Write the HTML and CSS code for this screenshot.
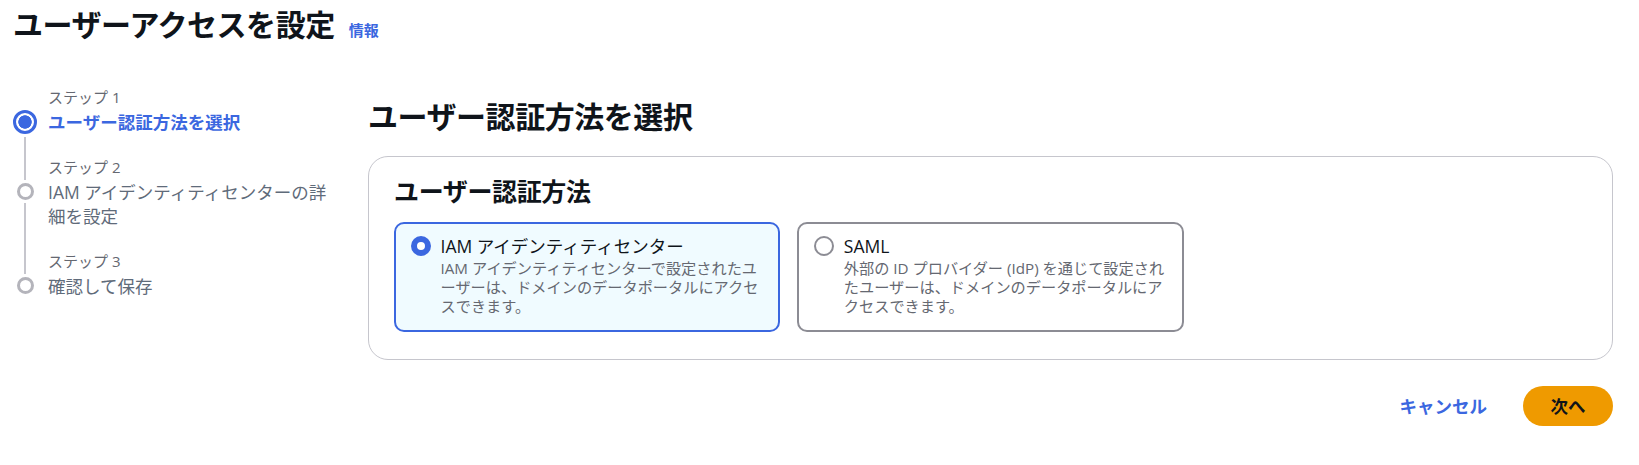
FILE: index.html
```html
<!DOCTYPE html>
<html lang="ja">
<head>
<meta charset="utf-8">
<title>ユーザーアクセスを設定</title>
<link rel="stylesheet" href="styles.css">
</head>
<body>
<div class="page">
  <header class="page-header">
    <h1 class="page-title">ユーザーアクセスを設定</h1>
    <a class="info-link" href="#">情報</a>
  </header>
  <div class="wizard">
    <nav class="steps">
      <ol class="step-list">
        <li class="step step-active">
          <div class="step-ind">
            <span class="seg seg-top seg-hidden"></span>
            <span class="dot dot-active"></span>
            <span class="seg seg-bottom"></span>
          </div>
          <div class="step-text">
            <div class="step-label">ステップ 1</div>
            <div class="step-title">ユーザー認証方法を選択</div>
          </div>
        </li>
        <li class="step">
          <div class="step-ind">
            <span class="seg seg-top seg-top-small"></span>
            <span class="dot"></span>
            <span class="seg seg-bottom"></span>
          </div>
          <div class="step-text">
            <div class="step-label">ステップ 2</div>
            <div class="step-title">IAM アイデンティティセンターの詳<br>細を設定</div>
          </div>
        </li>
        <li class="step">
          <div class="step-ind">
            <span class="seg seg-top seg-top-small"></span>
            <span class="dot"></span>
            <span class="seg seg-bottom seg-hidden"></span>
          </div>
          <div class="step-text">
            <div class="step-label">ステップ 3</div>
            <div class="step-title">確認して保存</div>
          </div>
        </li>
      </ol>
    </nav>
    <main class="form">
      <h1 class="form-title">ユーザー認証方法を選択</h1>
      <section class="container">
        <h2 class="container-title">ユーザー認証方法</h2>
        <div class="tiles">
          <label class="tile tile-selected">
            <span class="radio radio-checked"></span>
            <span class="tile-body">
              <span class="tile-title">IAM アイデンティティセンター</span>
              <span class="tile-desc">IAM アイデンティティセンターで設定されたユ<br>ーザーは、ドメインのデータポータルにアクセ<br>スできます。</span>
            </span>
          </label>
          <label class="tile">
            <span class="radio"></span>
            <span class="tile-body">
              <span class="tile-title">SAML</span>
              <span class="tile-desc">外部の ID プロバイダー (IdP) を通じて設定され<br>たユーザーは、ドメインのデータポータルにア<br>クセスできます。</span>
            </span>
          </label>
        </div>
      </section>
      <div class="actions">
        <button class="btn btn-link" type="button">キャンセル</button>
        <button class="btn btn-primary" type="button">次へ</button>
      </div>
    </main>
  </div>
</div>
</body>
</html>
```
FILE: styles.css
```css
* { box-sizing: border-box; }
html, body { margin: 0; padding: 0; background: #ffffff; }
body {
  font-family: "Open Sans", "Noto Sans CJK JP", sans-serif;
  color: #0f141a;
}
.page { padding: 6px 26px 0 13px; }

.page-header {
  display: flex;
  align-items: baseline;
  gap: 14px;
  height: 37.5px;
}
.page-title {
  margin: 0;
  font-size: 30px;
  line-height: 37.5px;
  letter-spacing: -0.015em;
  font-weight: 700;
}
.info-link {
  font-size: 15px;
  font-weight: 700;
  color: #3b67e0;
  text-decoration: none;
}

.wizard {
  display: grid;
  grid-template-columns: 355px 1fr;
  margin-top: 43.5px;
}

/* steps navigation */
.step-list { list-style: none; margin: 0; padding: 0; }
.step { display: flex; gap: 11px; }
.step-ind {
  flex: none;
  width: 24px;
  display: flex;
  flex-direction: column;
  align-items: center;
}
.seg { width: 2px; background: #c6c6cd; flex: none; }
.seg-top { height: 19.5px; margin-bottom: 3px; }
.seg-top-small { height: 23px; }
.seg-bottom { flex: 1; margin-top: 3px; }
.seg-hidden { background: transparent; }
.dot {
  flex: none;
  width: 17px;
  height: 17px;
  border-radius: 50%;
  border: 3px solid #b4b4bb;
  background: #ffffff;
}
.dot-active {
  width: 24px;
  height: 24px;
  border: 3px solid #3b67e0;
  background: radial-gradient(circle, #3b67e0 0 6.4px, #ffffff 7px);
}
.step-text { white-space: nowrap; padding-bottom: 23.5px; }
.step:last-child .step-text { padding-bottom: 0; }
.step-label {
  font-size: 15px;
  line-height: 20px;
  color: #656871;
  margin-bottom: 2.5px;
}
.step-title {
  font-size: 17.5px;
  line-height: 24px;
  color: #5f6b7a;
}
.step-active .step-title { color: #3b67e0; font-weight: 700; }

/* form */
.form-title {
  margin: 10.75px 0 20.75px;
  font-size: 30px;
  line-height: 37.5px;
  letter-spacing: -0.015em;
  font-weight: 700;
}
.container {
  border: 1px solid #c6c6cd;
  border-radius: 20px;
  padding: 19px 25px 27px;
}
.container-title {
  margin: 0 0 16px;
  font-size: 25px;
  line-height: 30px;
  letter-spacing: -0.015em;
  font-weight: 700;
}
.tiles {
  display: grid;
  grid-template-columns: repeat(3, 1fr);
  gap: 17px;
}
.tile {
  display: flex;
  align-items: flex-start;
  gap: 10px;
  border: 2.5px solid #8c8c94;
  border-radius: 10px;
  padding: 9.5px 14.5px 14px;
  background: #ffffff;
  cursor: pointer;
}
.tile-selected {
  border-color: #3b67e0;
  background: #f0fbff;
}
.radio {
  flex: none;
  width: 20px;
  height: 20px;
  margin-top: 2.5px;
  border-radius: 50%;
  border: 2.5px solid #8c8c94;
  background: #ffffff;
}
.radio-checked { border: 6px solid #3b67e0; }
.tile-body { display: flex; flex-direction: column; white-space: nowrap; }
.tile-title {
  font-size: 17.5px;
  line-height: 25px;
  color: #0f141a;
}
.tile-desc {
  font-size: 15.2px;
  line-height: 19px;
  color: #656871;
}

.actions {
  display: flex;
  justify-content: flex-end;
  gap: 11px;
  margin-top: 26px;
}
.btn {
  font-family: inherit;
  font-size: 17.5px;
  font-weight: 700;
  height: 40px;
  border: none;
  cursor: pointer;
}
.btn-link {
  background: transparent;
  color: #3b67e0;
  padding: 0 25px;
}
.btn-primary {
  background: #ef9a00;
  color: #0f141a;
  border-radius: 20px;
  padding: 0 27.5px;
}
```
